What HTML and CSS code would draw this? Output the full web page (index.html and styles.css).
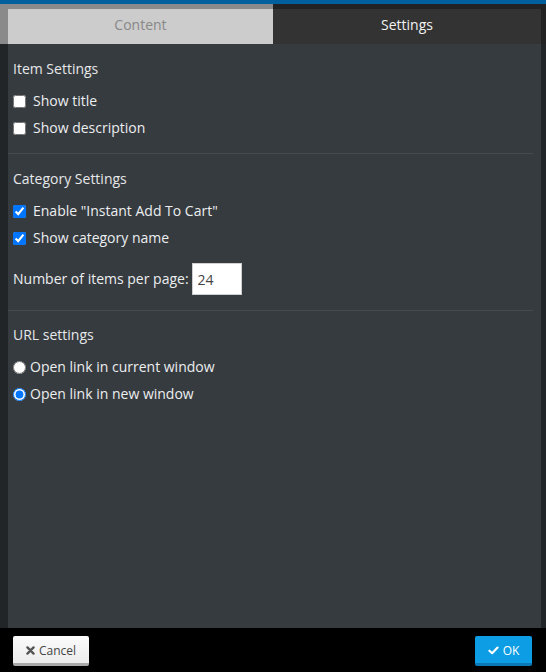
FILE: index.html
```html
<!DOCTYPE html>
<html>
<head>
<meta charset="utf-8">
<link rel="stylesheet" href="styles.css">
</head>
<body>
<div class="topbar"></div>
<div class="tabs">
  <div class="tab tab-content"><div class="tab-inner">Content</div></div>
  <div class="tab tab-settings"><div class="tab-inner">Settings</div></div>
</div>
<div class="main">
  <div class="panel">
    <section class="section">
      <div class="heading">Item Settings</div>
      <label class="row check"><input type="checkbox"><span>Show title</span></label>
      <label class="row check"><input type="checkbox"><span>Show description</span></label>
    </section>
    <hr class="divider">
    <section class="section">
      <div class="heading">Category Settings</div>
      <label class="row check"><input type="checkbox" checked><span>Enable "Instant Add To Cart"</span></label>
      <label class="row check"><input type="checkbox" checked><span>Show category name</span></label>
      <div class="row number-row"><span>Number of items per page:</span><input class="num" type="text" value="24"></div>
    </section>
    <hr class="divider">
    <section class="section section-last">
      <div class="heading">URL settings</div>
      <label class="row radio"><input type="radio" name="url"><span>Open link in current window</span></label>
      <label class="row radio"><input type="radio" name="url" checked><span>Open link in new window</span></label>
    </section>
  </div>
</div>
<div class="footer">
  <button class="btn btn-cancel"><svg class="ico" viewBox="0 0 10 10" width="9" height="9"><path d="M1.6 1.6 L8.4 8.4 M8.4 1.6 L1.6 8.4" stroke="#555" stroke-width="2.6" stroke-linecap="round"/></svg>Cancel</button>
  <button class="btn btn-ok"><svg class="ico" viewBox="0 0 12 10" width="11" height="9"><path d="M1.5 5.2 L4.5 8 L10.5 1.8" fill="none" stroke="#fff" stroke-width="2.4" stroke-linecap="round" stroke-linejoin="round"/></svg>OK</button>
</div>
</body>
</html>
```

FILE: styles.css
```css
* { box-sizing: border-box; }
html, body { height: 100%; }
body {
  margin: 0;
  background: #222222;
  font-family: "Open Sans", "Noto Sans", sans-serif;
  display: flex;
  flex-direction: column;
  color: #e2e4e6;
}
.topbar {
  height: 4px;
  background: #00609e;
  flex: none;
}
.tabs {
  display: grid;
  grid-template-columns: 273px 273px;
  flex: none;
}
.tab { height: 40px; }
.tab-content {
  background: #8a8a8a;
  padding: 5px 0 0 8px;
}
.tab-settings {
  background: #222222;
  padding: 5px 5px 0 0;
}
.tab-inner {
  height: 35px;
  display: flex;
  align-items: center;
  justify-content: center;
  font-size: 14px;
  padding-bottom: 4px;
}
.tab-content .tab-inner { background: #cccccc; color: #888888; }
.tab-settings .tab-inner { background: #333333; color: #f2f2f2; }
.main {
  flex: 1;
  display: flex;
  background: #212528;
  padding: 0 5px 0 8px;
}
.panel {
  flex: 1;
  background: #363b3f;
}
.section {
  padding: 15px 0 15px 5px;
  display: flex;
  flex-direction: column;
  align-items: flex-start;
}
.section-last { padding-top: 14px; }
.heading {
  font-size: 14px;
  line-height: 20px;
  margin-bottom: 12px;
  color: #e6e8ea;
}
.row {
  display: flex;
  align-items: center;
  font-size: 14px;
  line-height: 20px;
  color: #eceef0;
}
.row + .row { margin-top: 7px; }
.row input[type=checkbox] {
  width: 13px;
  height: 13px;
  margin: 0 7px 0 0;
}
.row input[type=radio] {
  width: 13px;
  height: 13px;
  margin: 0 4px 0 0;
}
.number-row { margin-top: 15px !important; }
.num {
  width: 50px;
  height: 32px;
  margin-left: 3px;
  border: 1px solid #cfcfcf;
  background: #fff;
  padding: 0 0 0 5px;
  font-family: "Open Sans", sans-serif;
  font-size: 14px;
  color: #444;
  outline: none;
}
.divider {
  margin: 0 8px 0 0;
  border: 0;
  height: 1px;
  background: #464b50;
}
.footer {
  height: 44px;
  flex: none;
  background: #000;
  display: flex;
  justify-content: space-between;
  align-items: flex-start;
  padding: 8px 14px 0 13px;
}
.btn {
  height: 30px;
  border: 0;
  border-radius: 2px;
  font-family: "Open Sans", sans-serif;
  font-size: 12px;
  display: flex;
  align-items: center;
  justify-content: center;
  gap: 4px;
  padding: 2px 0 0;
}
.btn-cancel {
  width: 76px;
  background: linear-gradient(#fbfbfb, #ececec);
  border-bottom: 3px solid #a9a9a9;
  color: #444;
}
.btn-ok {
  width: 57px;
  background: #0d9de4;
  border-bottom: 3px solid #0a78b6;
  color: #fff;
}
.ico { display: block; }
```
